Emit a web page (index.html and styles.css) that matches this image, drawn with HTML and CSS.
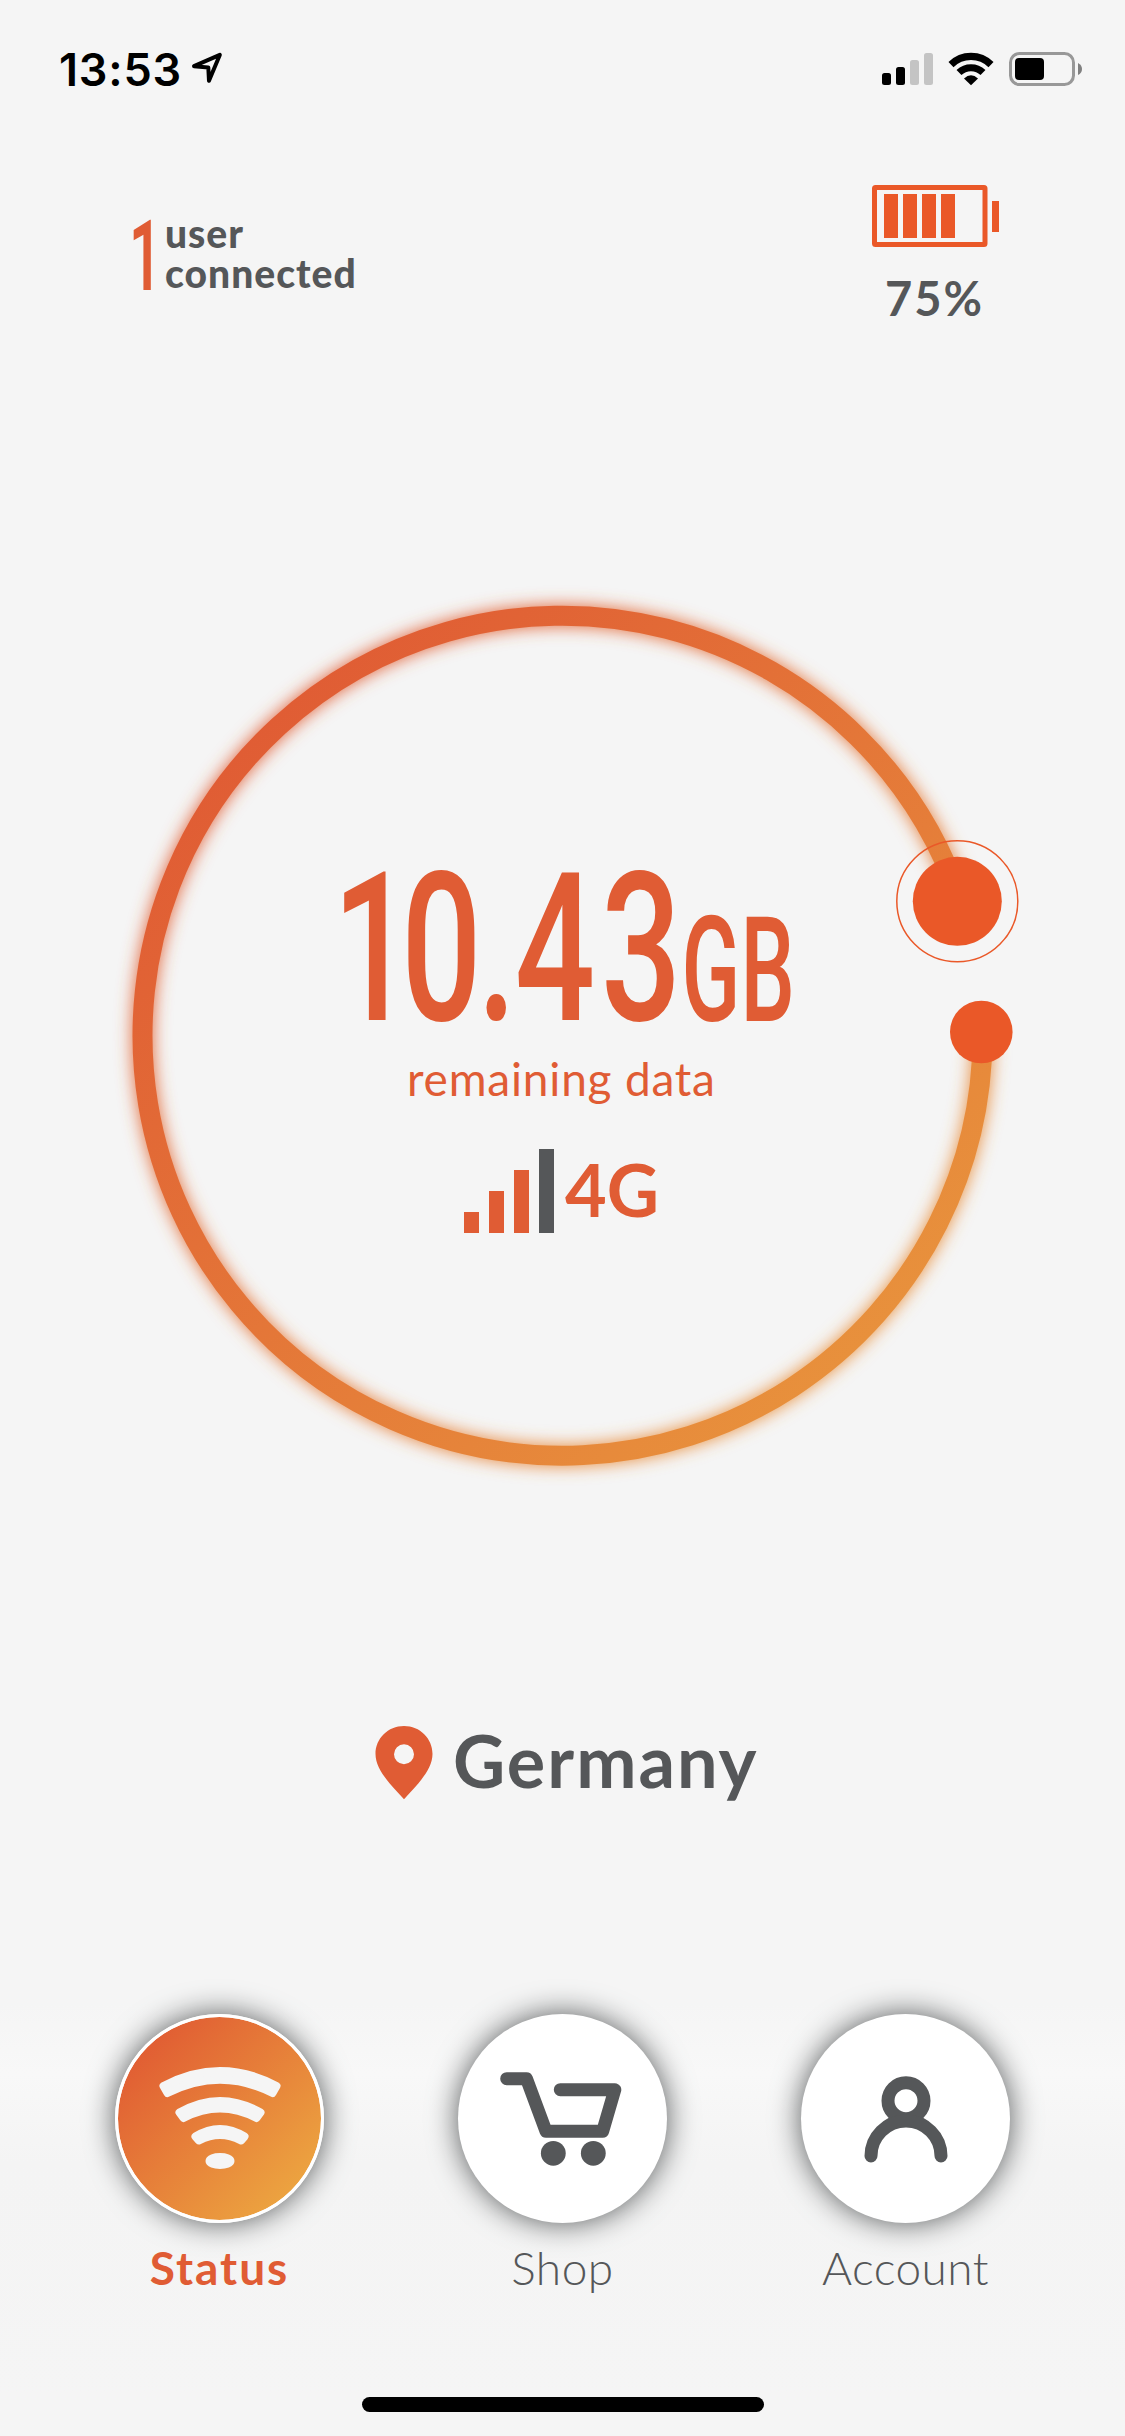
FILE: index.html
```
<!DOCTYPE html>
<html lang="en">
    <head>
        <title>Status</title>
        <meta charset="utf-8">
        <meta name="viewport" content="width=device-width, initial-scale=1">
        <link rel="stylesheet" href="styles.css">
    </head>
    <body>
        <div class="status-bar">
            <span class="clock">13:53</span>
            <svg class="location-arrow" width="32" height="32" viewBox="0 0 32 32">
                <path d="M3 14.2 L28.8 2.9 L18 28.8 L17.3 15.4 Z"/>
            </svg>
            <div class="system-icons">
                <svg width="51" height="34" viewBox="0 0 51 34">
                    <rect x="0" y="21" width="9" height="12" rx="2.5"/>
                    <rect x="14" y="15" width="9" height="18" rx="2.5"/>
                    <rect class="off" x="28" y="8" width="9" height="25" rx="2.5"/>
                    <rect class="off" x="42" y="1" width="9" height="32" rx="2.5"/>
                </svg>
                <svg width="46" height="34" viewBox="0 0 46 34">
                    <path class="wave" d="M3 12.6 A28.5 28.5 0 0 1 43 12.6"/>
                    <path class="wave" d="M11 20.5 A17.5 17.5 0 0 1 35 20.5"/>
                    <path d="M16 26.6 Q23 20 30 26.6 L23 33.3 Z"/>
                </svg>
                <svg width="74" height="34" viewBox="0 0 74 34">
                    <rect class="shell" x="1.5" y="1.5" width="63" height="31" rx="9"/>
                    <rect x="6" y="6" width="29" height="22" rx="4"/>
                    <path class="tip" d="M69 11 Q73 13 73 17 Q73 21 69 23 Z"/>
                </svg>
            </div>
        </div>

        <header class="header">
            <div class="users">
                <svg class="user-count" width="24" height="74" viewBox="0 0 24 74">
                    <text transform="scale(0.58 1)" x="-5" y="72">1</text>
                </svg>
                <p class="users-label">user<br>connected</p>
            </div>
            <div class="battery">
                <svg width="128" height="63" viewBox="0 0 128 63">
                    <rect class="case" x="2.5" y="2.5" width="110.5" height="57" rx="1"/>
                    <rect x="12" y="9" width="14" height="44"/>
                    <rect x="31" y="9" width="14" height="44"/>
                    <rect x="50" y="9" width="14" height="44"/>
                    <rect x="69" y="9" width="14" height="44"/>
                    <rect x="120" y="16" width="7" height="31"/>
                </svg>
                <span class="percent">75%</span>
            </div>
        </header>

        <main class="gauge">
            <svg class="ring" width="1125" height="1112" viewBox="0 0 1125 1112">
                <defs>
                    <linearGradient id="ringFill" gradientUnits="userSpaceOnUse" x1="250" y1="243" x2="875" y2="868">
                        <stop offset="0" stop-color="#e05c34"/>
                        <stop offset="1" stop-color="#e8913c"/>
                    </linearGradient>
                    <filter id="glow" filterUnits="userSpaceOnUse" x="80" y="80" width="960" height="960">
                        <feGaussianBlur stdDeviation="8.5"/>
                    </filter>
                </defs>
                <path class="arc" filter="url(#glow)" d="M982.5 556 A420 420 0 1 1 960.1 420.3"/>
                <path class="arc" d="M982.5 556 A420 420 0 1 1 960.1 420.3"/>
                <circle class="halo" cx="957.3" cy="421.3" r="60.5"/>
                <circle class="dot" cx="957.3" cy="421.3" r="44.5"/>
                <circle class="dot" cx="981.3" cy="552" r="31.3"/>
            </svg>
            <div class="reading">
                <svg class="amount" width="460" height="160" viewBox="0 0 460 160">
                    <text class="number" transform="scale(0.68 1)" x="-11 90 202 257 384" y="153">10.43</text>
                    <text class="unit" transform="scale(0.59 1)" x="579 679" y="154">GB</text>
                </svg>
                <span class="caption">remaining data</span>
                <div class="signal">
                    <span class="bar bar-1"></span>
                    <span class="bar bar-2"></span>
                    <span class="bar bar-3"></span>
                    <span class="bar bar-4"></span>
                    <span class="network">4G</span>
                </div>
            </div>
        </main>

        <div class="country">
            <svg width="58" height="74" viewBox="0 0 58 74">
                <path fill-rule="evenodd" d="M29 0 C13 0 0.5 12.5 0.5 28 C0.5 44 16 59 29 73.3 C42 59 57.5 44 57.5 28 C57.5 12.5 45 0 29 0 Z M29 18.3 A10 10 0 1 1 29 38.3 A10 10 0 1 1 29 18.3 Z"/>
            </svg>
            <span class="country-name">Germany</span>
        </div>

        <nav class="tabs">
            <a class="tab active">
                <span class="circle">
                    <svg class="wifi" width="140" height="117" viewBox="0 0 140 117">
                        <path d="M13.5 26 Q70 -4 126.5 26 L122.5 33 Q70 6.4 17.5 33 Z"/>
                        <path d="M29.5 52.5 Q70 29.5 110.5 52.5 L106.5 58 Q70 39 33.5 58 Z"/>
                        <path d="M45.5 76.5 Q70 61.5 94.5 76.5 L91 80.5 Q70 69.5 49 80.5 Z"/>
                        <ellipse cx="70" cy="101" rx="10.5" ry="4"/>
                    </svg>
                </span>
                <span class="tab-label">Status</span>
            </a>
            <a class="tab">
                <span class="circle">
                    <svg class="line" width="140" height="117" viewBox="0 0 140 117">
                        <path d="M13.7 18.7 H33.5 L53 71.2 H109.7 L121.8 29.7 H67.3"/>
                        <circle class="wheel" cx="60.3" cy="93.3" r="12.4"/>
                        <circle class="wheel" cx="100.3" cy="93.3" r="12.4"/>
                    </svg>
                </span>
                <span class="tab-label">Shop</span>
            </a>
            <a class="tab">
                <span class="circle">
                    <svg class="line" width="140" height="117" viewBox="0 0 140 117">
                        <circle cx="70" cy="40.7" r="18"/>
                        <path d="M35 96 A35 35 0 0 1 105 96"/>
                    </svg>
                </span>
                <span class="tab-label">Account</span>
            </a>
        </nav>
        <div class="home-indicator"></div>
    </body>
</html>
```
FILE: styles.css
```
* {
  box-sizing: border-box;
}
body {
  margin: 0;
  width: 1125px;
  height: 2436px;
  display: flex;
  flex-direction: column;
  overflow: hidden;
  background: #f5f5f5;
  color: #555759;
  font-family: Lato, "Open Sans", sans-serif;
}
svg {
  display: block;
  flex: none;
  overflow: visible;
}

/* iOS status bar */
.status-bar {
  height: 132px;
  display: flex;
  align-items: flex-start;
  padding: 52px 42px 0 59px;
}
.clock {
  color: #000;
  font: 600 45px/35px Inter, sans-serif;
  letter-spacing: 0.8px;
}
.location-arrow {
  margin-left: 9px;
  fill: none;
  stroke: #000;
  stroke-width: 4;
  stroke-linejoin: round;
}
.system-icons {
  display: flex;
  gap: 15px;
  margin-left: auto;
}
.off {
  fill: #c4c4c4;
}
.wave {
  fill: none;
  stroke: #000;
  stroke-width: 7.2;
}
.shell {
  fill: none;
  stroke: #989898;
  stroke-width: 3;
}
.tip {
  fill: #808080;
}

/* users and battery */
.header {
  height: 348px;
  display: flex;
  justify-content: space-between;
  align-items: flex-start;
  padding: 53px 125px 0 132px;
}
.users {
  display: flex;
  margin-top: 33px;
}
.user-count {
  fill: #e05c34;
  font: 600 98px Roboto, sans-serif;
}
.users-label {
  margin: -5px 0 0 9px;
  font-size: 39px;
  font-weight: 900;
  line-height: 40px;
  letter-spacing: 1px;
}
.battery {
  display: flex;
  flex-direction: column;
  align-items: flex-start;
  fill: #ea5828;
}
.case {
  fill: none;
  stroke: #ea5828;
  stroke-width: 5;
}
.percent {
  margin: 22px 0 0 13px;
  font-size: 47px;
  font-weight: 700;
  line-height: 56px;
  letter-spacing: 2px;
}

/* data gauge */
.gauge {
  height: 1112px;
  display: grid;
}
.ring,
.reading {
  grid-area: 1 / 1;
}
.arc {
  fill: none;
  stroke: url(#ringFill);
  stroke-width: 20;
}
.dot {
  fill: #ea5828;
}
.halo {
  fill: none;
  stroke: #ea5828;
  stroke-width: 1.5;
}
.reading {
  display: flex;
  flex-direction: column;
  align-items: flex-start;
  padding: 387px 0 0 340px;
  color: #e05c34;
}
.amount {
  fill: #e05c34;
  font-family: Roboto, sans-serif;
}
.number {
  font-size: 208px;
  font-weight: 500;
}
.unit {
  font-size: 146px;
  font-weight: 500;
}
.caption {
  margin: 24px 0 0 67px;
  font-size: 46px;
  line-height: 56px;
  letter-spacing: 0.8px;
}
.signal {
  display: flex;
  align-items: flex-end;
  gap: 10px;
  height: 84px;
  margin: 42px 0 0 124px;
}
.bar {
  width: 15px;
  background: #e05c34;
}
.bar-1 {
  height: 21px;
}
.bar-2 {
  height: 42px;
}
.bar-3 {
  height: 63px;
}
.bar-4 {
  height: 84px;
  background: #555759;
}
.network {
  margin: 0 0 2px 1px;
  font-size: 72px;
  font-weight: 700;
  line-height: 84px;
}

/* current country */
.country {
  height: 341px;
  display: flex;
  align-items: center;
  padding-left: 375px;
  fill: #e05c34;
}
.country-name {
  margin: 0 0 6px 20px;
  font-size: 72px;
  font-weight: 700;
  line-height: 84px;
  letter-spacing: 2px;
}

/* bottom navigation */
.tabs {
  height: 464px;
  display: flex;
  justify-content: center;
  gap: 134px;
  padding-top: 81px;
  background: linear-gradient(#f5f5f5 70px, #f8f8f8 140px, #f4f4f4 230px, #f5f5f5);
}
.tab {
  width: 209px;
  display: flex;
  flex-direction: column;
  align-items: center;
}
.circle {
  width: 209px;
  height: 209px;
  display: flex;
  align-items: center;
  justify-content: center;
  border-radius: 50%;
  background: #fff;
  box-shadow: 0 0 30px #555859;
}
.active .circle {
  border: 3px solid #fff;
  background: linear-gradient(135deg, #e05832 8%, #eda941 92%) padding-box;
}
.wifi {
  fill: #f5f5f5;
  stroke: #f5f5f5;
  stroke-width: 8;
  stroke-linejoin: round;
}
.line {
  fill: none;
  stroke: #555759;
  stroke-width: 13;
  stroke-linecap: round;
  stroke-linejoin: round;
}
.line .wheel {
  fill: #555759;
  stroke: none;
}
.tab-label {
  margin-top: 17px;
  font-size: 46px;
  font-weight: 300;
  line-height: 56px;
  letter-spacing: 0.5px;
}
.active .tab-label {
  color: #e05c34;
  font-weight: 700;
  letter-spacing: 2px;
}
.home-indicator {
  width: 402px;
  height: 15px;
  margin-left: 362px;
  border-radius: 8px;
  background: #000;
}
```
